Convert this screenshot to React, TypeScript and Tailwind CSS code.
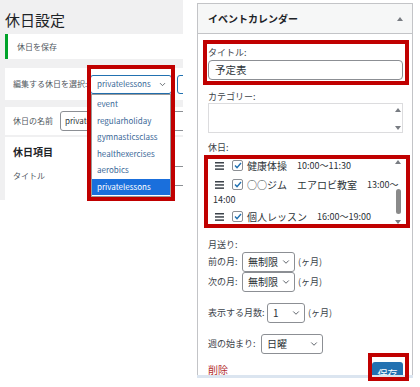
import { ChevronDown } from 'lucide-react';

const jp = "font-['Noto_Sans_CJK_JP','Noto_Sans',sans-serif]";

function Sel({ text, w }: { text: string; w: string }) {
  return (
    <div className={`${w} h-[20px] shrink-0 flex items-center justify-between border border-[#8c8f94] rounded-[3px] bg-white pl-[5px] pr-[3px] text-[10px] text-[#2c3338]`}>
      <span className="leading-[12px]">{text}</span>
      <ChevronDown size={10} strokeWidth={2.2} className="text-[#50575e]" />
    </div>
  );
}

function Grip() {
  return (
    <svg width="9" height="8" viewBox="0 0 9 8" className="shrink-0 ml-[2px] mr-[8px]">
      <rect x="0" y="0" width="9" height="1.5" fill="#3c434a" />
      <rect x="0" y="3.2" width="9" height="1.5" fill="#3c434a" />
      <rect x="0" y="6.4" width="9" height="1.5" fill="#3c434a" />
    </svg>
  );
}

function Check() {
  return (
    <span className="flex shrink-0 w-[11px] h-[11px] mr-[4px] items-center justify-center border border-[#8c8f94] rounded-[2px] bg-white">
      <svg width="8" height="7" viewBox="0 0 8 7">
        <path d="M1 3.6 L3 5.6 L7 1" fill="none" stroke="#2271b1" strokeWidth="1.4" />
      </svg>
    </span>
  );
}

function Tri({ up, className }: { up?: boolean; className: string }) {
  return (
    <svg width="6" height="4" viewBox="0 0 6 4" className={`absolute ${className}`}>
      <path d={up ? 'M0 4 L3 0 L6 4 Z' : 'M0 0 L3 4 L6 0 Z'} fill="#787c82" />
    </svg>
  );
}

function Row({ name, time, className }: { name: string; time: string; className?: string }) {
  return (
    <div className={`h-[15px] flex items-center whitespace-nowrap ${className ?? ''}`}>
      <Grip />
      <Check />
      <span className="leading-[15px]">{name}</span>
      <span className="ml-[10px] text-[9px] leading-[15px]">{time}</span>
    </div>
  );
}

const options = ['event', 'regularholiday', 'gymnasticsclass', 'healthexercises', 'aerobics', 'privatelessons'];

function HolidaySettings() {
  return (
    <div className="relative w-[183px] h-[200px] shrink-0 overflow-hidden bg-[#f0f0f1]">
      <h1 className="ml-[5px] pt-[11px] text-[15px] leading-[18px] text-[#1d2327]">休日設定</h1>
      <div className="ml-[5px] mt-[5px] h-[25px] flex items-center bg-white border-l-[3px] border-[#00a32a] pl-[9px] text-[8px] text-[#50575e]">
        休日を保存
      </div>

      <div className="ml-[5px] mt-[9px] h-[32px] flex items-center bg-white pl-[8px]">
        <span className="w-[77px] shrink-0 overflow-hidden whitespace-nowrap text-[8px] text-[#50575e]">編集する休日を選択:</span>
        <div className="w-[82px] h-[19px] shrink-0 flex items-center justify-between border border-[#2271b1] rounded-[3px] pl-[6px] pr-[4px] text-[8px] text-[#3b6998]">
          <span>privatelessons</span>
          <ChevronDown size={9} strokeWidth={2.2} className="text-[#50575e]" />
        </div>
        <div className="ml-[5px] w-[20px] h-[19px] shrink-0 border border-[#2271b1] rounded-[3px]" />
      </div>

      <div className="ml-[5px] mt-[7px] h-[28px] flex items-center bg-white pl-[8px]">
        <span className="w-[47px] shrink-0 text-[8px] text-[#50575e]">休日の名前</span>
        <div className="w-[130px] h-[20px] shrink-0 flex items-center border border-[#8c8f94] rounded-[3px] pl-[4px] text-[8px] text-[#2c3338]">
          privatelessons
        </div>
      </div>

      <div className="ml-[5px] mt-[2px] h-[70px] bg-white pl-[8px] pt-[8px]">
        <h2 className="text-[10px] leading-[14px] font-bold text-[#1d2327]">休日項目</h2>
        <div className="mt-[7px] h-[20px] flex items-center">
          <span className="w-[158px] shrink-0 text-[8px] text-[#50575e]">タイトル</span>
          <div className="w-[40px] h-[20px] shrink-0 border border-[#8c8f94] rounded-[3px]" />
        </div>
      </div>

      <div className="absolute left-[91px] top-[94px] w-[80px] border border-[#9a9a9a] bg-white py-[1px] shadow-[0_2px_4px_rgba(0,0,0,0.2)]">
        {options.map((o, i) => (
          <div
            key={o}
            className={`h-[16.5px] leading-[16.5px] pl-[5px] text-[8px] ${i === options.length - 1 ? 'bg-[#1a6fdc] text-white' : 'text-[#3b6998]'}`}
          >
            {o}
          </div>
        ))}
      </div>
    </div>
  );
}

function EventCalendar() {
  return (
    <div className="ml-[14px] mt-[3px] w-[216px] shrink-0">
      <div className="relative h-[372px] overflow-hidden border-x border-t border-[#c3c4c7] bg-white text-[#3c434a]">
        <div className="relative h-[30px] flex items-center border-b border-[#c3c4c7] bg-[#f6f7f7] pl-[10px]">
          <span className="text-[10px] leading-[12px] font-bold text-[#1d2327]">イベントカレンダー</span>
          <Tri up className="right-[9px] top-[13px]" />
        </div>

        <div className="pl-[10px] pr-[9px]">
          <div className="mt-[13px] text-[9px] leading-[12px]">タイトル:</div>
          <div className="mt-[1px] h-[20px] flex items-center border border-[#8c8f94] rounded-[4px] px-[6px] text-[10.5px] text-[#2c3338]">
            予定表
          </div>

          <div className="mt-[11px] text-[9px] leading-[12px]">カテゴリー:</div>
          <div className="relative h-[30px] border border-[#dcdcde]">
            <Tri up className="right-[1px] top-[4px]" />
            <Tri className="right-[1px] top-[22px]" />
          </div>

          <div className="mt-[9px] text-[9px] leading-[12px]">休日:</div>
          <div className="relative mt-[2px] h-[69px] overflow-hidden pl-[5px] pt-[2px] pr-[14px] text-[10px] text-[#2c3338]">
            <Row name="健康体操" time="10:00～11:30" className="mb-[4px]" />
            <Row name="○○ジム　エアロビ教室" time="13:00～" />
            <div className="h-[15px] leading-[15px] text-[9px] mb-[2px]">14:00</div>
            <Row name="個人レッスン" time="16:00～19:00" />
            <Tri up className="right-[2px] top-[4px]" />
            <div className="absolute right-[2px] top-[33px] w-[5px] h-[25px] rounded-full bg-[#8a8a8a]" />
            <Tri className="right-[2px] top-[64px]" />
          </div>

          <div className="mt-[14px] text-[9px] leading-[12px]">月送り:</div>
          <div className="mt-[1px] flex items-center text-[9px] whitespace-nowrap">
            <span className="w-[34px] shrink-0">前の月:</span>
            <Sel text="無制限" w="w-[53px]" />
            <span className="ml-[3px]">(ヶ月)</span>
          </div>
          <div className="flex items-center text-[9px] whitespace-nowrap">
            <span className="w-[34px] shrink-0">次の月:</span>
            <Sel text="無制限" w="w-[53px]" />
            <span className="ml-[3px]">(ヶ月)</span>
          </div>

          <div className="mt-[11px] flex items-center text-[9px] whitespace-nowrap">
            <span className="w-[59px] shrink-0">表示する月数:</span>
            <Sel text="1" w="w-[38px]" />
            <span className="ml-[3px]">(ヶ月)</span>
          </div>

          <div className="mt-[11px] flex items-center text-[9px] whitespace-nowrap">
            <span className="w-[53px] shrink-0">週の始まり:</span>
            <Sel text="日曜" w="w-[62px]" />
          </div>

          <div className="mt-[8px] flex items-start justify-between">
            <span className="mt-[1px] text-[10px] leading-[13px] text-[#b32d2e] underline">削除</span>
            <div className="w-[31px] h-[22px] flex items-center justify-center rounded-[3px] bg-[#2271b1] text-[10px] text-white">
              保存
            </div>
          </div>
        </div>
      </div>
      <div className="h-[3px] bg-[#dbe5f0]" />
    </div>
  );
}

export default function App() {
  return (
    <div className={`relative w-[420px] h-[387px] overflow-hidden bg-white flex items-start ${jp}`}>
      <HolidaySettings />
      <EventCalendar />

      <div className="absolute left-[87px] top-[65px] w-[88px] h-[136px] border-[4px] border-[#c00000]" />
      <div className="absolute left-[203px] top-[40px] w-[206px] h-[45px] border-[4px] border-[#c00000]" />
      <div className="absolute left-[204px] top-[155px] w-[206px] h-[73px] border-[4px] border-[#c00000]" />
      <div className="absolute left-[368px] top-[353px] w-[41px] h-[28px] border-[4px] border-[#c00000]" />
    </div>
  );
}
